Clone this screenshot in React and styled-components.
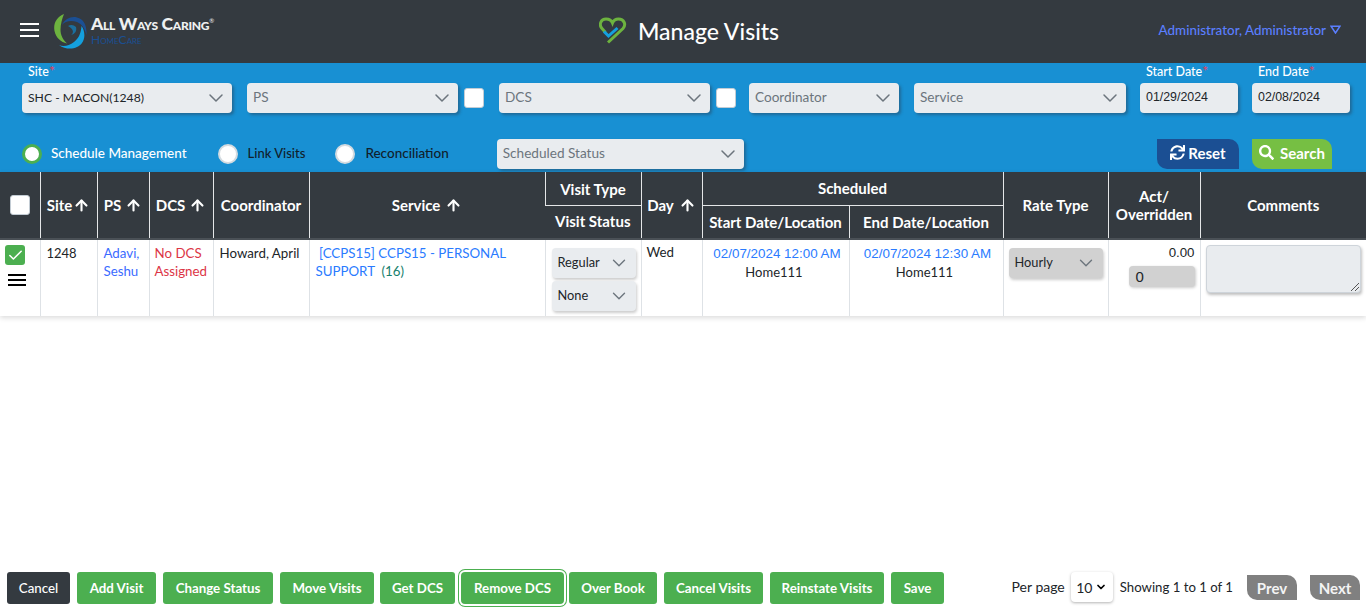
import React from "react";
import styled, { createGlobalStyle } from "styled-components";
import { ChevronDown, ArrowUp, Check } from "lucide-react";
import { FaSync, FaSearch } from "react-icons/fa";

const Global = createGlobalStyle`
  html, body { margin: 0; padding: 0; background: #fff; }
  body { font-family: Lato, "Open Sans", sans-serif; font-size: 14px; color: #212529; }
  * { box-sizing: border-box; }
`;

const Page = styled.div`
  width: 1366px; height: 607px; display: flex; flex-direction: column; overflow: hidden;
`;
const Header = styled.header`
  height: 63px; flex: none; background: #343a40; display: grid;
  grid-template-columns: 1fr auto 1fr; align-items: center; padding: 0 28px 0 20px;
`;
const Brand = styled.div`display: flex; align-items: center;`;
const Burger = styled.div`
  width: 19px; height: 14px; display: flex; flex-direction: column; justify-content: space-between; margin: -4px 15px 0 0;
  span { display: block; height: 2px; background: #fff; }
`;
const LogoText = styled.div`
  margin: 0 0 0 3px; display: flex; flex-direction: column; line-height: 1;
`;
const LogoName = styled.div`
  color: #eef0f0; font-size: 17.5px; font-weight: 900; font-variant: small-caps; letter-spacing: -0.3px; line-height: 14px; white-space: nowrap;
  sup { font-size: 6px; font-weight: 400; vertical-align: 7px; line-height: 0; }
`;
const LogoSub = styled.div`
  color: #1b4f93; font-size: 12px; font-variant: small-caps; line-height: 12px; margin-top: 3px;
`;
const TitleWrap = styled.div`display: flex; align-items: center; gap: 11px; margin: -2px 0 0 20px;`;
const Title = styled.h1`
  margin: 0; color: #fff; font-size: 23px; font-weight: 500; line-height: 30px;
`;
const User = styled.div`
  justify-self: end; display: flex; align-items: center; gap: 4px; margin: -4px -3px 0 0; color: #5b7fff; font-size: 13.4px;
  font-weight: 500;
`;
const Filters = styled.section`
  height: 109px; flex: none; background: #1890d3; padding: 0 16px 0 22px; display: flex; flex-direction: column;
`;
const Row = styled.div`
  display: flex; align-items: center; height: ${p => p.$h}px; margin-top: ${p => p.$top || 0}px;
`;
const Field = styled.div`
  width: ${p => p.$w}px; margin-left: ${p => p.$ml || 0}px; position: relative; flex: none;
`;
const Label = styled.label`
  position: absolute; left: ${p => p.$left || 6}px; top: -18px; color: #fff; font-size: 12.5px; line-height: 14px; font-weight: 500; white-space: nowrap;
  em { color: #e0405f; font-style: normal; font-size: 14px; line-height: 0; }
`;
const Select = styled.div`
  height: ${p => p.$h || 30}px; border-radius: 4px; background: ${p => p.$bg || "#e9ecef"};
  box-shadow: ${p => p.$flat ? "1px 2px 3px rgba(0,0,0,.2)" : "2px 2px 3px rgba(40,60,80,.45)"};
  display: flex; align-items: center; justify-content: space-between;
  padding: 0 ${p => p.$pr ?? 4}px ${p => p.$pb ?? 2}px ${p => p.$pl || 6}px; color: ${p => p.$muted ? "#6c757d" : "#212529"};
  font-size: ${p => p.$fs || 13.6}px; white-space: nowrap;
  font-family: ${p => p.$mono ? '"Liberation Sans", sans-serif' : "inherit"};
  svg { color: #6c757d; flex: none; margin-bottom: -2px; }
`;
const CheckSquare = styled.div`
  width: 20px; height: 20px; flex: none; margin-left: ${p => p.$ml || 0}px; background: #fff; border: 1px solid #c3ccd4; border-radius: 3px;
`;
const Radio = styled.div`
  width: 20px; height: 20px; flex: none; border-radius: 50%; background: #fff;
  border: ${p => p.$on ? "3px solid #4caf50" : "2px solid #d4dbe0"}; margin-left: ${p => p.$ml || 0}px;
`;
const RadioText = styled.span`
  margin-left: ${p => p.$ml}px; font-size: ${p => p.$fs || 13.5}px; color: ${p => p.$on ? "#fff" : "#10202c"}; white-space: nowrap;
  font-weight: 500; margin-bottom: 2px;
`;
const CornerBtn = styled.div`
  height: 30px; width: ${p => p.$w}px; margin-left: ${p => p.$ml}px; flex: none; background: ${p => p.$bg}; border-radius: 0 10px 0 10px;
  color: #fff; font-size: 15px; font-weight: 700; display: flex; align-items: center; justify-content: center; gap: ${p => p.$gap}px;
  padding-bottom: 3px;
`;
const Table = styled.table`
  width: 1366px; table-layout: fixed; border-collapse: collapse; flex: none;
  box-shadow: 0 2px 5px rgba(0,0,0,.14);
`;
const Th = styled.th`
  background: #343a40; color: #fff; font-size: 15px; font-weight: 700; padding: ${p => p.$pt || 0}px 0 ${p => p.$pb || 0}px; text-align: center; height: ${p => p.$h || 33}px;
  border-left: 1px solid #e4e6e8; border-bottom: ${p => p.$line ? "1px solid #e4e6e8" : "0"}; line-height: 18px; white-space: nowrap;
  &:first-child { border-left: 0; }
`;
const HeadSpacer = styled.td`height: 2px; padding: 0; background: #4a5056;`;
const Td = styled.td`
  vertical-align: top; padding: ${p => p.$pad || "4px 6px"}; height: 76px; border-left: 1px solid #dee2e6; font-size: ${p => p.$fs || 13.3}px; line-height: 18px;
  text-align: ${p => p.$align || "left"}; color: #212529;
  &:first-child { border-left: 0; }
`;
const Blue = styled.span`color: #2a7bff;`;
const DateText = styled.span`color: #2a7bff; font-family: "Liberation Sans", sans-serif; font-size: 13.4px; margin-left: 3px;`;
const Place = styled.span`font-size: 13px; margin-right: 3px;`;
const PBlue = styled.span`color: #3b6bff;`;
const Red = styled.span`color: #dc3545;`;
const Teal = styled.span`color: #17806d;`;
const Amount = styled.span`font-family: "Liberation Sans", sans-serif; font-size: 13.3px;`;
const Sort = styled.span`
  display: inline-flex; align-items: center; justify-content: center; gap: ${p => p.$gap ?? 5}px;
`;
const Checked = styled.div`
  width: 20px; height: 20px; border-radius: 3px; background: #4caf50; color: #fff; display: flex; align-items: center; justify-content: center;
`;
const RowMenu = styled.div`
  width: 18px; height: 12px; margin: 9px 0 0 3px; display: flex; flex-direction: column; justify-content: space-between;
  span { display: block; height: 2px; background: #000; }
`;
const Stack = styled.div`display: flex; flex-direction: column; gap: 3px;`;
const NumberBox = styled.div`
  width: 66px; height: 21px; margin: 4px 0 0 auto; background: #d1d1d1; border-radius: 4px; text-align: left; padding-left: 7px;
  font-family: "Liberation Sans", sans-serif; font-size: 15px; line-height: 21px; box-shadow: 1px 1px 3px rgba(0,0,0,.2);
`;
const Comments = styled.div`
  width: 155px; height: 48px; background: #e9ecef; border: 1px solid #ced4da; border-radius: 4px; box-shadow: 1px 2px 3px rgba(0,0,0,.25); position: relative;
`;
const Grip = styled.svg`position: absolute; right: 0; bottom: 0;`;
const Spacer = styled.div`flex: 1;`;
const Footer = styled.footer`
  flex: none; height: 32px; margin-bottom: 3px; padding: 0 6px 0 7px; display: flex; align-items: flex-start;
`;
const Btn = styled.div`
  height: 32px; width: ${p => p.$w}px; margin-left: ${p => p.$ml ?? 7}px; flex: none; border-radius: 3px; background: ${p => p.$dark ? "#343a40" : "#4caf50"};
  color: #fff; font-size: 13.3px; font-weight: ${p => p.$dark ? 500 : 700}; display: flex; align-items: center; justify-content: center; white-space: nowrap;
  ${p => p.$focus && "border-radius: 4px; box-shadow: 0 0 0 2px #fff, 0 0 0 3px #4caf50;"}
`;
const PerPage = styled.span`font-size: ${p => p.$fs || 14}px; white-space: nowrap; line-height: 30px;`;
const PageSelect = styled.div`
  width: 42px; height: 30px; margin: 0 7px 0 6px; flex: none; background: #fff; border-radius: 4px; box-shadow: 0 1px 3px rgba(0,0,0,.3);
  display: flex; align-items: center; justify-content: center; gap: 3px; font-size: 14px; color: #212529;
  svg { color: #000; }
`;
const PageBtn = styled.div`
  width: 50px; height: 25px; margin: 3px 0 0 ${p => p.$ml}px; flex: none; background: #808080; color: #f4f4f4; border-radius: 0 10px 0 10px;
  font-size: 15px; font-weight: 700; display: flex; align-items: center; justify-content: center;
`;

const Logo = () => (
  <svg width="34" height="36" viewBox="0 0 34 36" style={{ flex: "none" }}>
    <path d="M10 0 C3 3 -1 9 0.5 17 C2 24 7 28 13 29.5 C9 26 6.5 21 6.5 16 C6.5 10 8 5 10 0Z" fill="#6db33f" />
    <path d="M8 11 C11 5 17 2 23 3.5 C29 5 33 10 32.5 21 C31 15 28 10 23 8 C17 6 11 7 8 11Z" fill="#1b4f93" />
    <path d="M5 31 C9 33 15 32 20 28 C24 25 27 20 27.5 12 C31 17 31.5 24 28 29 C24 35 13 37 5 31Z" fill="#14a0de" />
    <path d="M14 12 C17 10 20 11 22 13 C23 17 21 20 17 21 C20 19 20 15 14 12Z" fill="#1b6f9e" />
  </svg>
);
const Heart = () => (
  <svg width="28" height="27" viewBox="0 0 28 27" style={{ flex: "none" }}>
    <path d="M9 25.5 L24 11.5 C27.5 7.5 25 2 19.5 2 C16.5 2 14.5 3.5 13.5 6 C12.5 3.5 10 2 7 2 C2 2 -0.5 7.5 3 11.5 L6.5 15.5" fill="none" stroke="#6db33f" strokeWidth="3" />
    <path d="M5 14.5 L9.5 19 L18.5 11" fill="none" stroke="#14a0de" strokeWidth="3" />
  </svg>
);
const Up = ({ size = 17 }) => <ArrowUp size={size} strokeWidth={3} color="#fff" />;

const Dd = ({ w, ml, children, muted }) => (
  <Field $w={w} $ml={ml}>
    <Select $muted={muted}>{children}<ChevronDown size={24} strokeWidth={1.5} /></Select>
  </Field>
);
const InCell = ({ children, bg }) => (
  <Select $h={30} $bg={bg} $fs={12.8} $pl={6} $pr={6} $pb={2} $flat><span>{children}</span><ChevronDown size={22} strokeWidth={1.5} /></Select>
);

const actions = [
  ["Add Visit", 79], ["Change Status", 110], ["Move Visits", 94], ["Get DCS", 75, 6],
  ["Remove DCS", 103, 6, true], ["Over Book", 88, 5], ["Cancel Visits", 99], ["Reinstate Visits", 114], ["Save", 53],
];
const widths = [40, 57, 52, 64, 96, 236, 96, 61, 147, 154, 105, 92, 166];

export default function App() {
  return (
    <Page>
      <Global />
      <Header>
        <Brand>
          <Burger><span /><span /><span /></Burger>
          <Logo />
          <LogoText>
            <LogoName>All Ways Caring<sup>®</sup></LogoName>
            <LogoSub>HomeCare</LogoSub>
          </LogoText>
        </Brand>
        <TitleWrap><Heart /><Title>Manage Visits</Title></TitleWrap>
        <User>
          Administrator, Administrator
          <svg width="11" height="9" viewBox="0 0 11 9"><path d="M1 1.2 H10 L5.5 8Z" fill="none" stroke="#5b7fff" strokeWidth="1.5" /></svg>
        </User>
      </Header>
      <Filters>
        <Row $h={30} $top={20}>
          <Field $w={210}>
            <Label $left={6}>Site<em>*</em></Label>
            <Select $fs={12.2}>SHC - MACON(1248)<ChevronDown size={24} strokeWidth={1.5} /></Select>
          </Field>
          <Dd w={211} ml={15} muted>PS</Dd>
          <CheckSquare $ml={6} />
          <Dd w={211} ml={15} muted>DCS</Dd>
          <CheckSquare $ml={6} />
          <Dd w={150} ml={13} muted>Coordinator</Dd>
          <Dd w={212} ml={15} muted>Service</Dd>
          <Field $w={98} $ml={14}>
            <Label>Start Date<em>*</em></Label>
            <Select $mono $fs={12.4}>01/29/2024</Select>
          </Field>
          <Field $w={98} $ml={14}>
            <Label>End Date<em>*</em></Label>
            <Select $mono $fs={12.4}>02/08/2024</Select>
          </Field>
        </Row>
        <Row $h={30} $top={26}>
          <Radio $on />
          <RadioText $on $ml={9}>Schedule Management</RadioText>
          <Radio $ml={31} />
          <RadioText $ml={10} $fs={13}>Link Visits</RadioText>
          <Radio $ml={30} />
          <RadioText $ml={10}>Reconciliation</RadioText>
          <Field $w={247} $ml={48}>
            <Select $muted>Scheduled Status<ChevronDown size={24} strokeWidth={1.5} /></Select>
          </Field>
          <Spacer />
          <CornerBtn $w={82} $bg="#1b4f93" $gap={3}><FaSync size={15} />Reset</CornerBtn>
          <CornerBtn $w={80} $ml={13} $bg="#76bf43" $gap={6}><FaSearch size={15} />Search</CornerBtn>
          <div style={{ width: 18 }} />
        </Row>
      </Filters>
      <Table>
        <colgroup>{widths.map((w, i) => <col key={i} style={{ width: w }} />)}</colgroup>
        <thead>
          <tr>
            <Th rowSpan={2}><CheckSquare $ml={10} /></Th>
            <Th rowSpan={2}><Sort $gap={1}>Site<Up /></Sort></Th>
            <Th rowSpan={2}><Sort $gap={4}>PS<Up /></Sort></Th>
            <Th rowSpan={2}><Sort $gap={4}>DCS<Up /></Sort></Th>
            <Th rowSpan={2}>Coordinator</Th>
            <Th rowSpan={2}><Sort>Service<Up /></Sort></Th>
            <Th $line $pt={2}>Visit Type</Th>
            <Th rowSpan={2}><Sort>Day<Up /></Sort></Th>
            <Th colSpan={2} $line>Scheduled</Th>
            <Th rowSpan={2}>Rate Type</Th>
            <Th rowSpan={2}>Act/<br />Overridden</Th>
            <Th rowSpan={2}>Comments</Th>
          </tr>
          <tr>
            <Th $pb={2}>Visit Status</Th>
            <Th>Start Date/Location</Th>
            <Th>End Date/Location</Th>
          </tr>
          <tr><HeadSpacer colSpan={13} /></tr>
        </thead>
        <tbody>
          <tr>
            <Td $pad="5px 5px"><Checked><Check size={17} strokeWidth={2.2} /></Checked><RowMenu><span /><span /><span /></RowMenu></Td>
            <Td $fs={13}>1248</Td>
            <Td><PBlue>Adavi, Seshu</PBlue></Td>
            <Td $pad="4px 5px"><Red>No DCS Assigned</Red></Td>
            <Td>Howard, April</Td>
            <Td><Blue>&nbsp;[CCPS15] CCPS15 - PERSONAL</Blue><br /><Blue>SUPPORT</Blue> <Teal>&nbsp;(16)</Teal></Td>
            <Td $pad="8px 5px 0 6px"><Stack><InCell>Regular</InCell><InCell>None</InCell></Stack></Td>
            <Td $pad="3px 5px">Wed</Td>
            <Td $align="center"><DateText>02/07/2024 12:00 AM</DateText><br /><Place>Home111</Place></Td>
            <Td $align="center"><DateText>02/07/2024 12:30 AM</DateText><br /><Place>Home111</Place></Td>
            <Td $pad="8px 5px"><InCell bg="#d1d1d1">Hourly</InCell></Td>
            <Td $align="right" $pad="3px 5px"><Amount>0.00</Amount><NumberBox>0</NumberBox></Td>
            <Td $pad="5px 5px">
              <Comments>
                <Grip width="10" height="10" viewBox="0 0 10 10"><path d="M9 1 L1 9 M9 5 L5 9" stroke="#555" strokeWidth="1" /></Grip>
              </Comments>
            </Td>
          </tr>
        </tbody>
      </Table>
      <Spacer />
      <Footer>
        <Btn $dark $w={63} $ml={0}>Cancel</Btn>
        {actions.map(([t, w, ml, f]) => <Btn key={t} $w={w} $ml={ml} $focus={f}>{t}</Btn>)}
        <Spacer />
        <PerPage>Per page</PerPage>
        <PageSelect>10<ChevronDown size={12} strokeWidth={3.5} /></PageSelect>
        <PerPage $fs={13.2}>Showing 1 to 1 of 1</PerPage>
        <PageBtn $ml={14}>Prev</PageBtn>
        <PageBtn $ml={13}>Next</PageBtn>
      </Footer>
    </Page>
  );
}
